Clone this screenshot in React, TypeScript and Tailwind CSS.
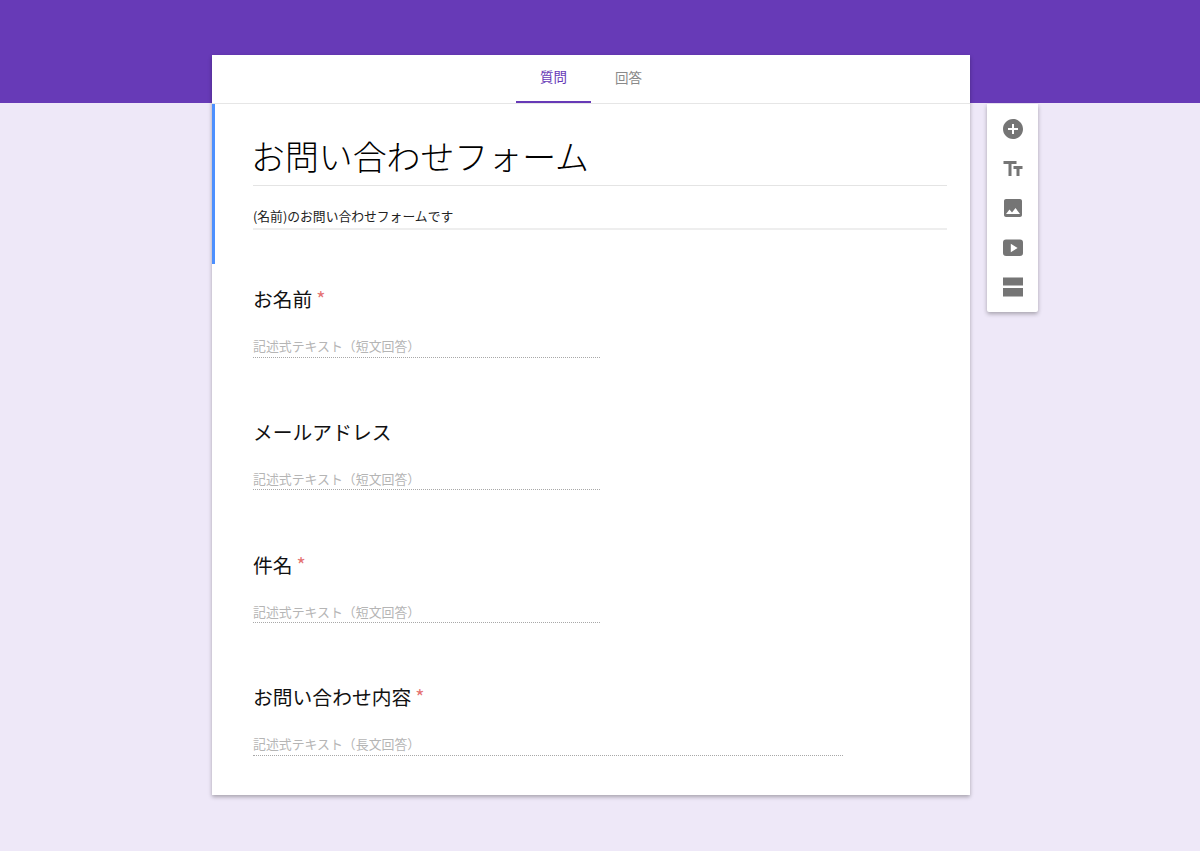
import { MdAddCircle, MdImage, MdTextFields } from "react-icons/md";

const questions = [
  { label: "お名前", required: true, hint: "記述式テキスト（短文回答）", width: "w-[347px] h-[22px]", height: "h-[133px]" },
  { label: "メールアドレス", required: false, hint: "記述式テキスト（短文回答）", width: "w-[347px] h-[21px]", height: "h-[133px]" },
  { label: "件名", required: true, hint: "記述式テキスト（短文回答）", width: "w-[347px] h-[21px]", height: "h-[132px]" },
  { label: "お問い合わせ内容", required: true, hint: "記述式テキスト（長文回答）", width: "w-[590px] h-[22px]", height: "h-[132px]" },
];

const PlayBox = ({ className }: { className?: string }) => (
  <svg viewBox="0 0 24 24" className={className} fill="currentColor">
    <path d="M5 3.5h14a3 3 0 0 1 3 3v10.5a3 3 0 0 1-3 3H5a3 3 0 0 1-3-3V6.5a3 3 0 0 1 3-3zm4.8 4.2v8.6l6.8-4.3z" fillRule="evenodd" />
  </svg>
);

const SectionBars = ({ className }: { className?: string }) => (
  <svg viewBox="0 0 24 24" className={className} fill="currentColor">
    <path d="M2 2.5h20v8H2zM2 13h20v8.5H2z" />
  </svg>
);

const tools = [MdAddCircle, MdTextFields, MdImage, PlayBox, SectionBars];

export default function App() {
  return (
    <div className="min-h-[851px] overflow-hidden bg-[#eee8f8] font-['Noto_Sans_CJK_JP','Liberation_Sans',sans-serif]">
      <div className="h-[103px] bg-[#673ab7]" />
      <div className="-mt-[48px] ml-[212px] flex items-start">
        <div className="w-[758px] bg-white shadow-[0_2px_4px_rgba(0,0,0,0.3)]">
          {/* Tabs */}
          <div className="flex h-[49px] justify-center border-b border-[#e6e6e6]">
            <div className="flex h-[48px] w-[75px] items-center justify-center border-b-2 border-[#673ab7] pb-[4px] text-[13.5px] text-[#673ab7]">
              質問
            </div>
            <div className="flex h-[48px] w-[75px] items-center justify-center pb-[4px] text-[13.5px] text-[#8a8a8a]">
              回答
            </div>
          </div>

          {/* Title block */}
          <div className="h-[160px] border-l-[3px] border-[#4d90fe] pl-[38px] pr-[23px]">
            <div className="h-[82px] border-b border-[#e4e4e4] pt-[29px] text-[33.9px] font-light leading-[46px] text-black -indent-[2px]">
              お問い合わせフォーム
            </div>
            <div className="mt-[20px] h-[24px] border-b-2 border-[#eeeeee] text-[12.8px] leading-[20px] text-[#222]">
              (名前)のお問い合わせフォームです
            </div>
          </div>

          {/* Questions */}
          <div className="pl-[41px]">
            {questions.map((q) => (
              <div key={q.label} className={q.height}>
                <div className="pt-[21px] text-[19.8px] leading-[28px] text-[#111]">
                  {q.label}
                  {q.required && <span className="ml-[4px] text-[#e57373]">*</span>}
                </div>
                <div
                  className={`mt-[23px] border-b border-dotted border-[#a8a8a8] text-[12.9px] leading-[20px] text-[#b5b5b5] ${q.width}`}
                >
                  {q.hint}
                </div>
              </div>
            ))}
            <div className="h-[1px]" />
          </div>
        </div>

        {/* Side toolbar */}
        <div className="ml-[17px] mt-[49px] flex h-[208px] w-[51px] flex-col items-center gap-[15.5px] rounded-b-[2px] bg-white pt-[13px] shadow-[0_2px_4px_rgba(0,0,0,0.3)]">
          {tools.map((Icon, i) => (
            <Icon key={i} className="h-[24px] w-[24px] text-[#757575]" />
          ))}
        </div>
      </div>
    </div>
  );
}
